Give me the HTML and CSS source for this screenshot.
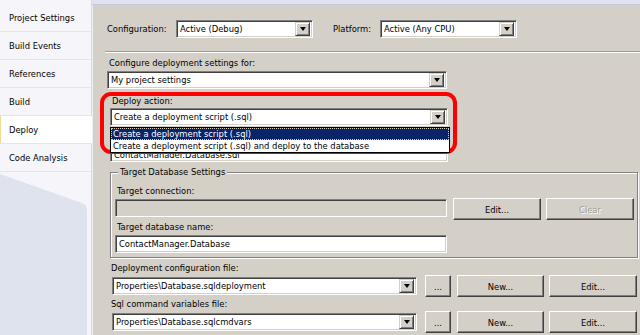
FILE: index.html
```html
<!DOCTYPE html>
<html>
<head>
<meta charset="utf-8">
<title>Deploy</title>
<link rel="stylesheet" href="styles.css">
</head>
<body>
<div class="app">
  <nav class="sidebar">
    <div class="tab-top"></div>
    <div class="tab">Project Settings</div>
    <div class="tab">Build Events</div>
    <div class="tab">References</div>
    <div class="tab">Build</div>
    <div class="tab active">Deploy</div>
    <div class="tab">Code Analysis</div>
    <div class="tab-fill">
      <svg width="91" height="163" viewBox="0 0 91 163"><path d="M0 2 L82 31 Q87 33 87 38 L87 163 L0 163 Z" fill="#dfe3ed"/></svg>
    </div>
  </nav>
  <main class="main">
    <div class="topstrip"></div>
    <div class="panel">
      <div class="config-row">
        <span class="lbl lbl-config">Configuration:</span>
        <div class="combo combo-config"><span class="combo-text">Active (Debug)</span><span class="drop"><i class="tri"></i></span></div>
        <span class="lbl lbl-platform">Platform:</span>
        <div class="combo combo-config"><span class="combo-text">Active (Any CPU)</span><span class="drop"><i class="tri"></i></span></div>
      </div>
      <div class="sep"></div>

      <div class="form">
        <span class="lbl lbl-settings">Configure deployment settings for:</span>
        <div class="combo combo-settings"><span class="combo-text">My project settings</span><span class="drop"><i class="tri"></i></span></div>

        <div class="deploy">
          <span class="lbl lbl-deploy">Deploy action:</span>
          <div class="deploy-combo-wrap">
            <div class="combo combo-deploy"><span class="combo-text">Create a deployment script (.sql)</span><span class="drop"><i class="tri"></i></span></div>
            <ul class="droplist">
              <li class="item selected"><span>Create a deployment script (.sql)</span></li>
              <li class="item"><span>Create a deployment script (.sql) and deploy to the database</span></li>
            </ul>
          </div>
          <span class="lbl lbl-script">Deployment script name:</span>
          <div class="textbox tb-script"><span class="combo-text script-text">ContactManager.Database.sql</span></div>
          <div class="highlight"></div>
        </div>

        <div class="group">
          <span class="group-title">Target Database Settings</span>
          <span class="lbl lbl-conn">Target connection:</span>
          <div class="row conn-row">
            <div class="textbox disabled tb-conn"></div>
            <div class="btn btn-edit">Edit...</div>
            <div class="btn btn-clear disabled-btn">Clear</div>
          </div>
          <span class="lbl lbl-dbname">Target database name:</span>
          <div class="textbox tb-dbname"><span class="combo-text">ContactManager.Database</span></div>
        </div>

        <span class="lbl lbl-file lbl-depconf">Deployment configuration file:</span>
        <div class="row file-row">
          <div class="combo combo-file"><span class="combo-text">Properties\Database.sqldeployment</span><span class="drop"><i class="tri"></i></span></div>
          <div class="btn btn-browse">...</div>
          <div class="btn btn-new">New...</div>
          <div class="btn btn-edit2">Edit...</div>
        </div>

        <span class="lbl lbl-file lbl-sqlcmd">Sql command variables file:</span>
        <div class="row file-row">
          <div class="combo combo-file"><span class="combo-text">Properties\Database.sqlcmdvars</span><span class="drop"><i class="tri"></i></span></div>
          <div class="btn btn-browse">...</div>
          <div class="btn btn-new">New...</div>
          <div class="btn btn-edit2">Edit...</div>
        </div>
      </div>
    </div>
  </main>
</div>
</body>
</html>
```
FILE: styles.css
```css
* { box-sizing: border-box; }
html, body { margin: 0; padding: 0; }
body {
  width: 640px;
  height: 335px;
  overflow: hidden;
  font-family: "DejaVu Sans Condensed", "DejaVu Sans", sans-serif;
  font-stretch: condensed;
  font-size: 9.3px;
  color: #000;
  background: #f6f6fa;
}
.app { display: flex; height: 335px; }

/* sidebar */
.sidebar {
  width: 92px;
  flex: none;
  display: flex;
  flex-direction: column;
  background: #f6f6fa;
  border-right: 1px solid #d9d9e4;
}
.tab-top { height: 4px; flex: none; }
.tab {
  height: 28px;
  flex: none;
  line-height: 27px;
  padding-left: 9px;
  border-bottom: 1px solid #e4e4ee;
  white-space: nowrap;
}
.tab.active {
  background: #fff;
  border-left: 1px solid #f2d99a;
  padding-left: 8px;
  margin-right: -1px;
  position: relative;
  z-index: 1;
}
.tab-fill { flex: 1; overflow: hidden; }
.tab-fill svg { display: block; }

/* main */
.main { flex: 1; display: flex; flex-direction: column; }
.topstrip { height: 5px; flex: none; background: #e1e1ef; border-bottom: 1px solid #c5c8da; }
.panel {
  flex: 1;
  background: #d4d0c8;
  border-left: 1px solid #eeeef4;
  display: flex;
  flex-direction: column;
}

.lbl { display: block; line-height: 12px; white-space: nowrap; }

.config-row {
  display: flex;
  align-items: center;
  margin: 15px 0 0 14px;
  height: 18px;
}
.lbl-config { width: 69px; }
.lbl-platform { width: 47px; margin-left: 20px; }

.sep {
  margin: 13px 0 0 12px;
  height: 2px;
  border-top: 1px solid #a09c94;
  border-bottom: 1px solid #fff;
}

.form { display: flex; flex-direction: column; align-items: flex-start; padding-left: 14px; }

/* combos & text boxes */
.combo, .textbox {
  height: 18px;
  background: #fff;
  border: 1px solid;
  border-color: #808080 #fff #fff #808080;
  box-shadow: inset 1px 1px #404040, inset -1px -1px #d4d0c8;
  display: flex;
  align-items: center;
  padding: 2px 2px 2px 3px;
  white-space: nowrap;
  overflow: hidden;
}
.combo-text { flex: 1; line-height: 12px; overflow: hidden; }
.drop {
  width: 15px;
  height: 14px;
  flex: none;
  background: #d4d0c8;
  border: 1px solid;
  border-color: #d4d0c8 #404040 #404040 #d4d0c8;
  box-shadow: inset 1px 1px #fff, inset -1px -1px #808080;
  display: flex;
  align-items: center;
  justify-content: center;
}
.tri {
  display: block;
  width: 0;
  height: 0;
  border-left: 3.5px solid transparent;
  border-right: 3.5px solid transparent;
  border-top: 4px solid #000;
}
.textbox.disabled { background: #d4d0c8; }

.combo-config { width: 137px; }

.lbl-settings { margin: 4px 0 0 2px; }
.combo-settings { width: 340px; margin-top: 2px; }

/* deploy block */
.deploy {
  position: relative;
  margin: 6px 0 0 3px;
  display: flex;
  flex-direction: column;
  align-items: flex-start;
}
.lbl-deploy { margin-left: 2px; }
.deploy-combo-wrap { position: relative; margin-top: 1px; }
.combo-deploy { width: 338px; }
.lbl-script { margin: 4px 0 0 2px; visibility: hidden; }
.tb-script { width: 338px; margin-top: 2px; align-items: flex-end; padding-bottom: 3px; }
.script-text { height: 7px; line-height: 7px; overflow: hidden; }

.droplist {
  position: absolute;
  left: 0;
  top: 19px;
  width: 340px;
  margin: 0;
  padding: 0;
  list-style: none;
  background: #fff;
  border: 1px solid #000;
  z-index: 3;
}
.item { height: 12px; line-height: 12px; padding-left: 2px; white-space: nowrap; }
.item.selected {
  background: #0a246a;
  color: #fff;
  outline: 1px dotted #d4d0c8;
  outline-offset: -1px;
}
.highlight {
  position: absolute;
  left: -10px;
  top: -3px;
  width: 357px;
  height: 62px;
  border: 4px solid #f00;
  border-radius: 11px;
  z-index: 2;
}

/* group box */
.group {
  margin-top: 10px;
  margin-left: 3px;
  width: 528px;
  border: 1px solid #808080;
  box-shadow: inset 1px 1px #fff, 1px 1px #fff;
  padding: 0 4px 4px;
  display: flex;
  flex-direction: column;
  align-items: flex-start;
}
.group-title {
  margin: -7px 0 0 3px;
  padding: 0 2px;
  line-height: 12px;
  background: #d4d0c8;
  white-space: nowrap;
}
.lbl-conn { margin: 7px 0 0 2px; }
.row { display: flex; align-items: flex-start; }
.conn-row { margin-top: 1px; }
.tb-conn { width: 332px; margin-top: 1px; }
.lbl-dbname { margin: 1px 0 0 2px; }
.tb-dbname { width: 332px; margin-top: 2px; }

/* buttons */
.btn {
  height: 22px;
  background: #d4d0c8;
  border: 1px solid;
  border-color: #fff #404040 #404040 #fff;
  box-shadow: inset -1px -1px #808080;
  display: flex;
  align-items: center;
  justify-content: center;
  white-space: nowrap;
  flex: none;
}
.btn-edit { width: 88px; margin-left: 6px; }
.btn-clear { width: 88px; margin-left: 5px; }
.disabled-btn { color: #a09c94; text-shadow: 1px 1px #fff; }

.lbl-depconf { margin: 4px 0 0 4px; }
.lbl-sqlcmd { margin: 1px 0 0 4px; }
.file-row { margin-top: 1px; margin-left: 5px; }
.combo-file { width: 305px; margin-top: 2px; }
.btn-browse { width: 26px; margin-left: 8px; }
.btn-new { width: 87px; margin-left: 6px; }
.btn-edit2 { width: 88px; margin-left: 5px; }
```
